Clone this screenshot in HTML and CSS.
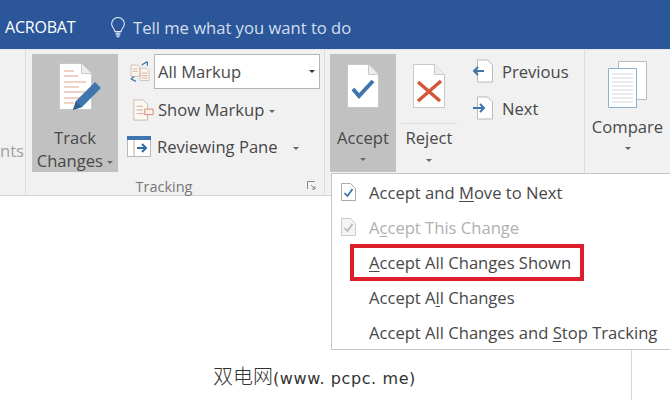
FILE: index.html
```html
<!DOCTYPE html>
<html lang="en">
<head>
  <meta charset="UTF-8">
  <title>Review ribbon</title>
  <link rel="stylesheet" href="styles.css">
</head>
<body>
  <div class="topbar">
    <span class="tab">ACROBAT</span>
    <svg class="bulb" width="16" height="21" viewBox="0 0 18 24" fill="none" stroke="#e6edf7" stroke-width="1.2">
      <path d="M5.500 16.500c0-3-3.800-4.600-3.800-8.600a7.300 7.300 0 0 1 14.600 0c0 4-3.800 5.600-3.800 8.600z"/>
      <path d="M6 18.500h6M6.500 20.500h5M7.500 22.500h3" stroke-width="1.400"/>
    </svg>
    <span class="tell">Tell me what you want to do</span>
  </div>

  <div class="ribbon">
    <div class="group stub"><span class="stub-text">nts</span></div>

    <div class="group tracking">
      <div class="group-body">
        <div class="big-btn track active">
          <svg class="track-icon" width="43" height="49" viewBox="0 0 43 49">
            <path d="M.5.500h22l10 10v36H.5z" fill="#fff" stroke="#c8c8c8"/>
            <path d="M22.500.500v10h10" fill="#eee" stroke="#c8c8c8"/>
            <path d="M5 8h10M5 13h14M5 19h22M5 24h15M5 29h22M5 35h18M5 40h10" stroke="#e0a48e"/>
            <path d="M14 47l3-9 19-19 6 6-19 19z" fill="#3f75ad"/>
            <path d="M14 47l3-9 6 6z" fill="#2f5f93"/>
          </svg>
          <span class="btn-label">Track</span>
          <span class="btn-label">Changes <i class="caret"></i></span>
        </div>
        <div class="tools">
          <div class="tool-row first">
            <svg class="tool-icon" width="20" height="23" viewBox="0 0 24 28">
              <path d="M1 6h8l3 3v11H1zM12 10h8l3 3v12H12z" fill="#fbf3ee" stroke="#c9b8ae"/>
              <path d="M3 11h6M3 14h6M14 16h7M14 19h7M14 22h7" stroke="#d9a58c"/>
              <path d="M14 6l7-4M21 2v5M1 23l6 3M1 23l4-3" fill="none" stroke="#3f75ad" stroke-width="1.500"/>
            </svg>
            <div class="markup-select">All Markup<i class="caret dark"></i></div>
          </div>
          <div class="tool-row second">
            <svg class="tool-icon" width="22" height="22" viewBox="0 0 24 24">
              <path d="M2 1h10l5 5v17H2z" fill="#fbf7f3" stroke="#c9b8ae"/>
              <path d="M5 8h7M5 12h7M5 16h9" stroke="#d9a58c"/>
              <path d="M14 11h9v6h-9z" fill="#fbf3ee" stroke="#d8846a"/>
            </svg>
            <span class="tool-label">Show Markup <i class="caret"></i></span>
          </div>
          <div class="tool-row pane">
            <svg class="tool-icon" width="24" height="21" viewBox="0 0 24 21">
              <path d="M.5.500h23v20H.5z" fill="#fff" stroke="#b9b9b9"/>
              <path d="M0 0h24v4H0z" fill="#3f75ad"/>
              <path d="M7 4v16" stroke="#d9a58c"/>
              <path d="M10 12h9M15 8l4 4-4 4" fill="none" stroke="#2f6aa6" stroke-width="2"/>
            </svg>
            <span class="tool-label">Reviewing Pane<i class="caret far"></i></span>
          </div>
        </div>
      </div>
      <div class="group-name">Tracking</div>
      <svg class="launcher" width="9" height="9" viewBox="0 0 9 9" fill="none" stroke="#8a8a8a">
        <path d="M.5 8V.5H8M4 4l4 4M8 5v3H5"/>
      </svg>
    </div>

    <div class="group changes">
      <div class="big-btn accept active">
        <svg width="32" height="44" viewBox="0 0 32 44">
          <path d="M.5.500h21l10 10v33H.5z" fill="#fff" stroke="#c8c8c8"/>
          <path d="M21.500.500v10h10" fill="#eee" stroke="#c8c8c8"/>
          <path d="M6 25l6 7L26 17" fill="none" stroke="#3f75ad" stroke-width="4"/>
        </svg>
        <span class="btn-label spaced">Accept</span>
        <i class="caret"></i>
      </div>
      <div class="reject">
        <div class="reject-top">
          <svg width="32" height="44" viewBox="0 0 32 44">
            <path d="M.5.500h21l10 10v33H.5z" fill="#fff" stroke="#c8c8c8"/>
            <path d="M21.500.500v10h10" fill="#eee" stroke="#c8c8c8"/>
            <path d="M5 18l22 19M28 17L5 37" fill="none" stroke="#d4573a" stroke-width="3.500"/>
          </svg>
        </div>
        <span class="btn-label">Reject</span>
        <i class="caret"></i>
      </div>
      <div class="nav-list">
        <div class="nav-row">
          <svg width="22" height="24" viewBox="0 0 22 24">
            <path d="M5.500 1h10l5 5v17h-15z" fill="#fff" stroke="#b9b9b9"/>
            <path d="M12 12H2M6 8l-4 4 4 4" fill="none" stroke="#3f75ad" stroke-width="2"/>
          </svg>
          <span>Previous</span>
        </div>
        <div class="nav-row">
          <svg width="22" height="24" viewBox="0 0 22 24">
            <path d="M5.500 1h10l5 5v17h-15z" fill="#fff" stroke="#b9b9b9"/>
            <path d="M1 12h11M8 8l4 4-4 4" fill="none" stroke="#3f75ad" stroke-width="2"/>
          </svg>
          <span>Next</span>
        </div>
      </div>
    </div>

    <div class="group compare">
      <svg width="40" height="48" viewBox="0 0 40 48">
        <path d="M10.500.500h28v38h-28z" fill="#fff" stroke="#b5bcc4"/>
        <path d="M.5 7.500h28v39H.5z" fill="#fff" stroke="#8fb0cf"/>
        <path d="M4 13h21M4 17h21M4 21h21M4 25h21M4 29h21M4 33h21M4 37h21M4 41h21" stroke="#cfd6dd"/>
      </svg>
      <span class="btn-label">Compare</span>
      <i class="caret"></i>
    </div>
  </div>

  <div class="doc">
    <div class="page">
      <p class="watermark"><span class="cjk">双电网</span>(www. pcpc. me)</p>
    </div>
  </div>

  <div class="menu">
    <div class="menu-item">
      <svg class="menu-icon" width="15" height="18" viewBox="0 0 15 18">
        <path d="M.5.500h9l5 5v12H.5z" fill="#fff" stroke="#aaa"/>
        <path d="M3.500 10l3 3 5-7" fill="none" stroke="#2f6aa6" stroke-width="1.600"/>
      </svg>
      <span>Accept and <u>M</u>ove to Next</span>
    </div>
    <div class="menu-item disabled">
      <svg class="menu-icon" width="15" height="18" viewBox="0 0 15 18">
        <path d="M.5.500h9l5 5v12H.5z" fill="#f4f4f4" stroke="#ccc"/>
        <path d="M3.500 10l3 3 5-7" fill="none" stroke="#b5b5b5" stroke-width="1.600"/>
      </svg>
      <span>A<u>c</u>cept This Change</span>
    </div>
    <div class="menu-item highlighted"><span><u>A</u>ccept All Changes Shown</span></div>
    <div class="menu-item"><span>Accept A<u>l</u>l Changes</span></div>
    <div class="menu-item"><span>Accept All Changes and <u>S</u>top Tracking</span></div>
  </div>
</body>
</html>
```

FILE: styles.css
```css
html, body {
  margin: 0;
  height: 400px;
  overflow: hidden;
}

body {
  position: relative;
  width: 670px;
  background-color: #fff;
  font-family: "Open Sans", "Noto Sans", Arial, sans-serif;
  font-size: 16.6px;
  color: #484848;
}

.topbar {
  display: flex;
  align-items: center;
  height: 49px;
  padding-left: 5px;
  padding-top: 5px;
  box-sizing: border-box;
  background-color: #2b579a;
}

.tab {
  width: 105px;
  font-size: 16px;
  letter-spacing: -0.2px;
  color: #fff;
}

.bulb {
  margin-right: 7px;
}

.tell {
  font-size: 16.6px;
  color: #d3deee;
}

.ribbon {
  display: flex;
  height: 147px;
  box-sizing: border-box;
  background-color: #f1f1f1;
  border-top: 1px solid #e4e8ee;
  border-bottom: 1px solid #d2d2d2;
}

.group {
  position: relative;
  box-sizing: border-box;
  border-right: 1px solid #dcdcdc;
}

.stub {
  width: 26px;
  flex-shrink: 0;
}

.stub-text {
  position: absolute;
  left: 0;
  top: 89px;
  color: #a0a0a0;
}

.tracking {
  width: 299px;
  padding: 4px 0 0 6px;
}

.group-body {
  display: flex;
}

.big-btn {
  display: flex;
  flex-direction: column;
  align-items: center;
  box-sizing: border-box;
  height: 118px;
}

.active {
  background-color: #c1c1c1;
}

.track {
  width: 86px;
  padding-top: 9px;
}

.track-icon {
  margin-left: 11px;
  margin-bottom: 14px;
}

.btn-label {
  line-height: 23px;
  white-space: nowrap;
}

.caret {
  display: inline-block;
  width: 0;
  height: 0;
  border-left: 3px solid transparent;
  border-right: 3px solid transparent;
  border-top: 3px solid #666;
  vertical-align: middle;
}

.caret.dark {
  margin-left: auto;
  border-top-color: #333;
}

.caret.far {
  margin-left: 15px;
}

.tools {
  display: flex;
  flex-direction: column;
  margin-left: 10px;
  width: 192px;
}

.tool-row {
  display: flex;
  align-items: center;
  height: 37px;
}

.tool-icon {
  flex-shrink: 0;
  margin-right: 4px;
}

.tool-row.first {
  align-items: flex-start;
  padding-left: 2px;
}

.tool-row.first .tool-icon {
  margin-top: 6px;
}

.tool-row.second {
  padding-left: 4px;
}

.tool-row.pane .tool-icon {
  margin-left: -1px;
  margin-right: 6px;
}

.tool-label {
  white-space: nowrap;
}

.markup-select {
  display: flex;
  align-items: center;
  flex: 1;
  height: 35px;
  box-sizing: border-box;
  padding: 0 4px 0 3px;
  background-color: #fff;
  border: 1px solid #b5b5b5;
}

.group-name {
  position: absolute;
  left: 0;
  right: 22px;
  bottom: -2px;
  text-align: center;
  font-size: 14.5px;
  line-height: 20px;
  color: #777;
}

.launcher {
  position: absolute;
  right: 8px;
  bottom: 5px;
}

.changes {
  display: flex;
  width: 260px;
  padding: 4px 0 0 5px;
}

.accept {
  width: 66px;
  padding-top: 10px;
}

.accept svg {
  margin-bottom: 18px;
}

.spaced {
  margin-bottom: 9px;
}

.reject {
  display: flex;
  flex-direction: column;
  align-items: center;
  width: 56px;
  margin-left: 5px;
}

.reject-top {
  width: 100%;
  height: 70px;
  box-sizing: border-box;
  padding-top: 10px;
  margin-bottom: 2px;
  text-align: center;
  border-bottom: 1px solid #dcdcdc;
}

.reject .btn-label {
  margin-bottom: 10px;
}

.nav-list {
  display: flex;
  flex-direction: column;
  gap: 13px;
  margin-left: 15px;
  padding-top: 5px;
}

.nav-row {
  display: flex;
  align-items: center;
  gap: 8px;
}

.compare {
  display: flex;
  flex-direction: column;
  align-items: center;
  flex: 1;
  border-right: 0;
  padding-top: 11px;
}

.compare svg {
  margin-bottom: 6px;
}

.compare .btn-label {
  margin-bottom: 9px;
}

.doc {
  height: 204px;
}

.page {
  width: 632px;
  height: 100%;
  box-sizing: border-box;
  border-right: 1px solid #d6d6d6;
  padding-top: 166px;
  padding-left: 213px;
}

.watermark {
  margin: 0;
  font-family: "DejaVu Sans", "Noto Sans CJK SC", sans-serif;
  font-size: 16px;
  letter-spacing: 0.6px;
  line-height: 28px;
  color: #333;
  white-space: nowrap;
}

.cjk {
  font-family: "Noto Sans CJK SC", sans-serif;
  font-size: 20px;
  font-weight: 300;
  letter-spacing: 0;
}

.menu {
  position: absolute;
  left: 331px;
  top: 173px;
  width: 339px;
  height: 177px;
  box-sizing: border-box;
  padding-top: 1px;
  background-color: #fff;
  border: 1px solid #c6c6c6;
  border-right: 0;
}

.menu-item {
  position: relative;
  height: 35px;
  line-height: 35px;
  padding-left: 37px;
  white-space: nowrap;
}

.menu-item u {
  text-decoration-thickness: 1px;
  text-underline-offset: 2px;
}

.menu-icon {
  position: absolute;
  left: 9px;
  top: 8px;
}

.disabled {
  color: #b0b0b0;
}

.highlighted::after {
  content: "";
  position: absolute;
  left: 18px;
  top: -1px;
  width: 234px;
  height: 37px;
  box-sizing: border-box;
  border: 4px solid #dc1f2a;
}
```
